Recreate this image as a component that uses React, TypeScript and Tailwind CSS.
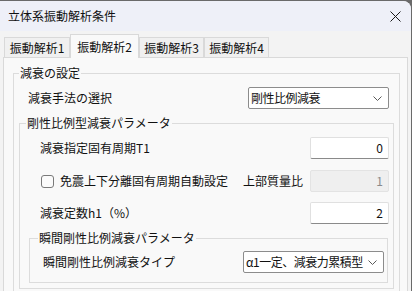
const Chevron = () => (
  <svg width="9" height="5" viewBox="0 0 9 5" className="shrink-0">
    <path d="M0.5 0.5 L4.5 4.5 L8.5 0.5" fill="none" stroke="#5a5a5a" strokeWidth="1" />
  </svg>
);

const Select = ({ value, width }: { value: string; width: string }) => (
  <div
    className={`${width} h-[22px] flex items-center justify-between border border-[#8c8c8c] bg-white rounded-[2px] pl-[2px] pr-[6px] overflow-hidden`}
  >
    <span className="text-[12px] leading-[16px] whitespace-nowrap tracking-[-0.5px]">{value}</span>
    <Chevron />
  </div>
);

const NumInput = ({ value, disabled }: { value: string; disabled?: boolean }) => (
  <div
    className={
      disabled
        ? "w-[79px] h-[22px] flex items-center justify-end pr-[5px] bg-[#efefef] border border-[#e3e3e3] rounded-[2px] text-[#8a8a8a]"
        : "w-[79px] h-[22px] flex items-center justify-end pr-[5px] bg-white border border-[#e0e0e0] border-b-[#8a8a8a] rounded-[2px]"
    }
  >
    <span className="text-[12px] leading-[16px]">{value}</span>
  </div>
);

const Tab = ({ label, active, width }: { label: string; active?: boolean; width: string }) => (
  <div
    className={
      active
        ? `${width} h-[24px] -mb-px relative z-10 flex items-center justify-center bg-[#f9f9f9] border border-b-0 border-[#d9d9d9] text-[12px]`
        : `${width} h-[20px] flex items-center justify-center bg-[#f0f0f0] border border-b-0 border-[#d9d9d9] text-[12px]`
    }
  >
    {label}
  </div>
);

export default function App() {
  return (
    <div className="w-[412px] h-[291px] overflow-hidden bg-[#6a6a6a] font-[family-name:'Noto_Sans_CJK_JP','Noto_Sans',sans-serif] text-[#111]">
      <div className="w-[411px] h-[291px] mt-px flex flex-col bg-[#f3f3f3] rounded-tr-[8px] overflow-hidden">
        {/* title bar */}
        <div className="h-[30px] shrink-0 flex items-center justify-between bg-[#eef0f8] pl-[8px] pr-[6px]">
          <span className="text-[12px] leading-[16px]">立体系振動解析条件</span>
          <svg width="11" height="11" viewBox="0 0 11 11" className="mr-[4px]">
            <path d="M0.5 0.5 L10.5 10.5 M10.5 0.5 L0.5 10.5" stroke="#1a1a1a" strokeWidth="1" />
          </svg>
        </div>

        {/* tabs */}
        <div className="h-[26px] shrink-0 flex items-end pl-[4px]">
          <Tab label="振動解析1" width="w-[66px]" />
          <Tab label="振動解析2" width="w-[69px]" active />
          <Tab label="振動解析3" width="w-[65px]" />
          <Tab label="振動解析4" width="w-[65px]" />
        </div>

        {/* panel */}
        <div className="ml-[3px] w-[405px] flex-1 border border-[#d9d9d9] bg-[#f9f9f9] pl-[9px] pt-[7px]">
          <fieldset className="w-[387px] border border-[#dcdcdc]">
            <legend className="ml-[5px] px-[1px] text-[12px] leading-[16px]">減衰の設定</legend>

            <div className="mt-[6px] h-[22px] flex items-center justify-between pl-[14px] pr-[10px]">
              <span className="text-[12px] leading-[16px]">減衰手法の選択</span>
              <Select value="剛性比例減衰" width="w-[141px]" />
            </div>

            <fieldset className="mt-[6px] mx-[5px] border border-[#dcdcdc] pb-[5px]">
              <legend className="ml-[6px] px-[1px] text-[12px] leading-[16px]">剛性比例型減衰パラメータ</legend>

              <div className="mt-[6px] h-[22px] flex items-center justify-between pl-[20px] pr-[4px]">
                <span className="text-[12px] leading-[16px]">減衰指定固有周期T1</span>
                <NumInput value="0" />
              </div>

              <div className="mt-[11px] h-[22px] flex items-center pl-[21px] pr-[4px]">
                <div className="w-[13px] h-[13px] border border-[#7a7a7a] rounded-[3px] bg-[#fbfbfb]" />
                <span className="ml-[6px] text-[12px] leading-[16px]">免震上下分離固有周期自動設定</span>
                <span className="ml-auto mr-[7px] text-[12px] leading-[16px]">上部質量比</span>
                <NumInput value="1" disabled />
              </div>

              <div className="mt-[10px] h-[22px] flex items-center justify-between pl-[20px] pr-[4px]">
                <span className="text-[12px] leading-[16px]">減衰定数h1（%）</span>
                <NumInput value="2" />
              </div>

              <fieldset className="mt-[6px] ml-[9px] mr-[5px] border border-[#dcdcdc] pb-[9px]">
                <legend className="ml-[8px] px-[1px] text-[12px] leading-[16px]">瞬間剛性比例減衰パラメータ</legend>
                <div className="mt-[5px] h-[22px] flex items-center justify-between pl-[13px] pr-[3px]">
                  <span className="text-[12px] leading-[16px]">瞬間剛性比例減衰タイプ</span>
                  <Select value="α1一定、減衰力累積型" width="w-[141px]" />
                </div>
              </fieldset>
            </fieldset>
            <div className="h-[10px]" />
          </fieldset>
        </div>
      </div>
    </div>
  );
}
